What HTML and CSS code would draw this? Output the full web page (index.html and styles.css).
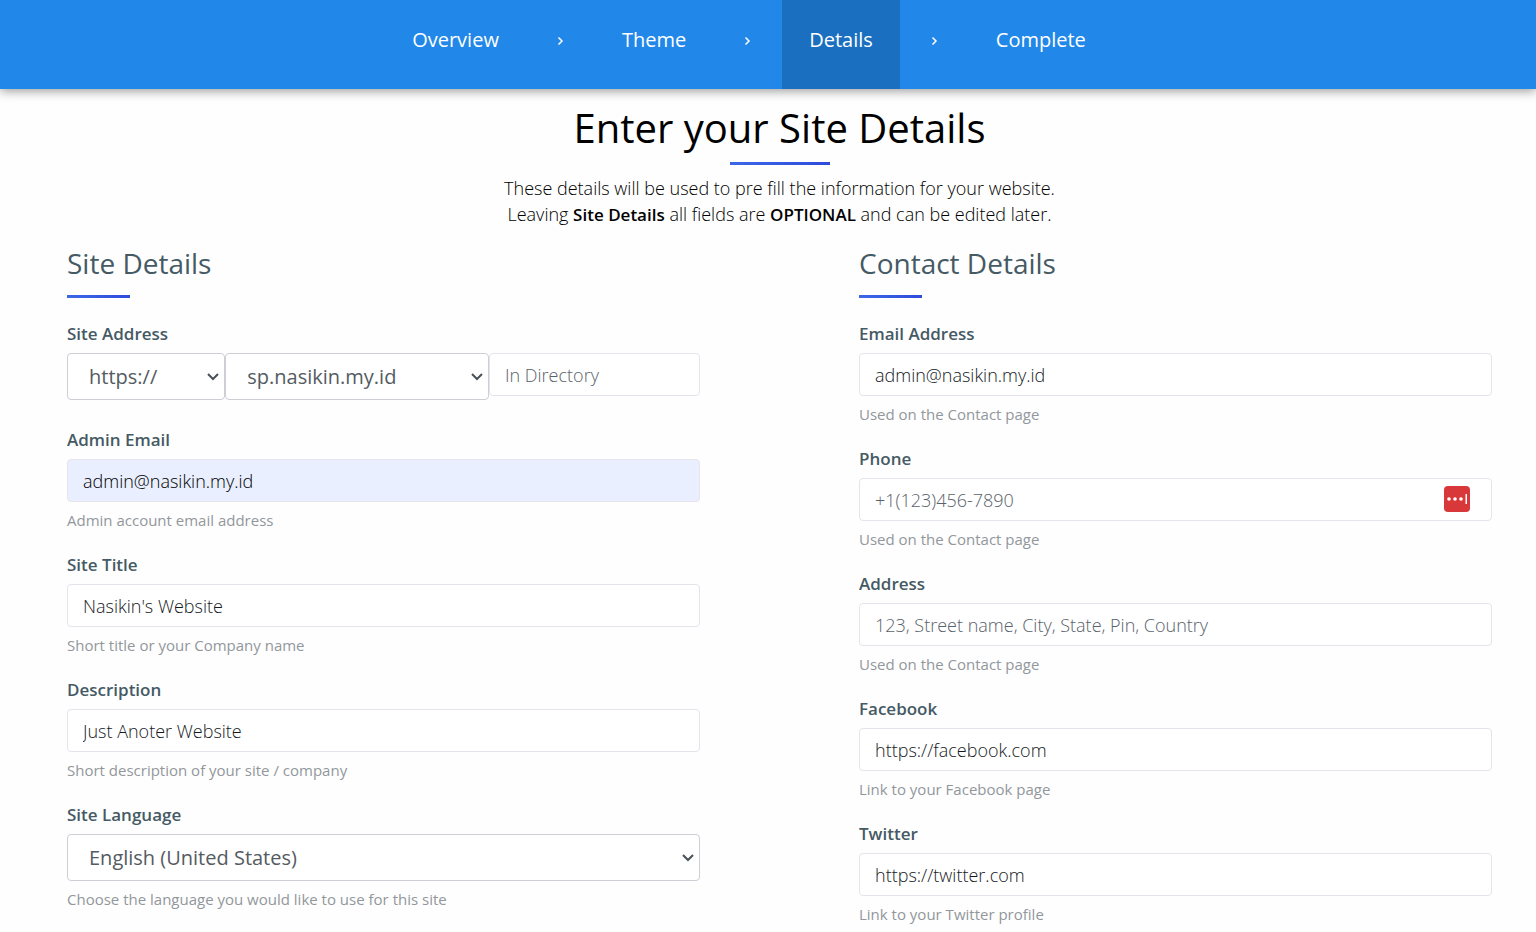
FILE: index.html
```html
<!DOCTYPE html>
<html lang="en">
	<head>
		<meta charset="utf-8">
		<meta name="viewport" content="width=device-width,initial-scale=1.0">
		<title>Enter your Site Details</title>
		<link rel="stylesheet" href="styles.css">
	</head>
	<body>
		<nav class="steps">
			<a href="#overview">Overview</a>
			<svg class="arrow" viewBox="0 0 8 10"><path d="M2 1.500 5.500 5 2 8.500"/></svg>
			<a href="#theme">Theme</a>
			<svg class="arrow" viewBox="0 0 8 10"><path d="M2 1.500 5.500 5 2 8.500"/></svg>
			<a class="active" href="#details">Details</a>
			<svg class="arrow" viewBox="0 0 8 10"><path d="M2 1.500 5.500 5 2 8.500"/></svg>
			<a href="#complete">Complete</a>
		</nav>
		<main class="content">
			<header class="intro">
				<h1>Enter your Site Details</h1>
				<p>These details will be used to pre fill the information for your website.<br>
				Leaving <b>Site Details</b> all fields are <b>OPTIONAL</b> and can be edited later.</p>
			</header>
			<form class="columns">
				<section class="column">
					<h2>Site Details</h2>
					<div class="field address">
						<label for="protocol">Site Address</label>
						<div class="group">
							<select id="protocol">
								<option>https://</option>
								<option>http://</option>
							</select>
							<select id="domain" aria-label="Domain">
								<option>sp.nasikin.my.id</option>
							</select>
							<input id="directory" type="text" placeholder="In Directory" aria-label="In Directory">
						</div>
					</div>
					<div class="field">
						<label for="admin_email">Admin Email</label>
						<input class="filled" id="admin_email" type="email" value="admin@nasikin.my.id">
						<small>Admin account email address</small>
					</div>
					<div class="field">
						<label for="title">Site Title</label>
						<input id="title" type="text" value="Nasikin's Website">
						<small>Short title or your Company name</small>
					</div>
					<div class="field">
						<label for="description">Description</label>
						<input id="description" type="text" value="Just Anoter Website">
						<small>Short description of your site / company</small>
					</div>
					<div class="field">
						<label for="language">Site Language</label>
						<select id="language">
							<option>English (United States)</option>
						</select>
						<small>Choose the language you would like to use for this site</small>
					</div>
				</section>
				<section class="column">
					<h2>Contact Details</h2>
					<div class="field">
						<label for="email">Email Address</label>
						<input id="email" type="email" value="admin@nasikin.my.id">
						<small>Used on the Contact page</small>
					</div>
					<div class="field">
						<label for="phone">Phone</label>
						<div class="with-icon">
							<input id="phone" type="tel" placeholder="+1(123)456-7890">
							<button class="fill" type="button" aria-label="Fill password">
								<svg width="26" height="26" viewBox="0 0 26 26">
									<rect width="26" height="26" rx="4" fill="#d9383a"/>
									<circle cx="5" cy="13" r="1.800" fill="#fff"/>
									<circle cx="11" cy="13" r="1.800" fill="#fff"/>
									<circle cx="17" cy="13" r="1.800" fill="#fff"/>
									<rect x="21.500" y="8" width="1.500" height="10" fill="#fff"/>
								</svg>
							</button>
						</div>
						<small>Used on the Contact page</small>
					</div>
					<div class="field">
						<label for="address">Address</label>
						<input id="address" type="text" placeholder="123, Street name, City, State, Pin, Country">
						<small>Used on the Contact page</small>
					</div>
					<div class="field">
						<label for="facebook">Facebook</label>
						<input id="facebook" type="url" value="https://facebook.com">
						<small>Link to your Facebook page</small>
					</div>
					<div class="field">
						<label for="twitter">Twitter</label>
						<input id="twitter" type="url" value="https://twitter.com">
						<small>Link to your Twitter profile</small>
					</div>
				</section>
			</form>
		</main>
	</body>
</html>
```
FILE: styles.css
```css
* {
	box-sizing: border-box;
	margin: 0;
	padding: 0;
}

body {
	background: #fefefe;
	color: #000;
	font: 300 18px/26px "Open Sans", sans-serif;
}

.steps {
	display: flex;
	justify-content: center;
	height: 89px;
	padding-right: 38px;
	background: #2187e9;
	box-shadow: 0 2px 10px rgba(0, 0, 0, .4);
	font-size: 20px;
	font-weight: 400;
	line-height: 80px;
}

.steps a {
	padding: 0 27px;
	color: #fff;
	text-decoration: none;
}

.steps .active {
	background: #1a6fc0;
}

.arrow {
	width: 69px;
	height: 10px;
	margin-top: 36px;
	fill: none;
	stroke: #fff;
	stroke-width: 1.500;
}

.content {
	padding: 11px 44px 0 67px;
}

.intro {
	text-align: center;
}

h1 {
	font-size: 40px;
	font-weight: 400;
	line-height: 56px;
}

h1::after,
h2::after {
	content: '';
	display: block;
	height: 3px;
	background: linear-gradient(90deg, #3b68e6, #2f4bdc);
}

h1::after {
	width: 100px;
	margin: 6px auto 10px;
}

h2 {
	margin-bottom: 22px;
	color: #455a64;
	font-size: 28px;
	font-weight: 400;
	line-height: 40px;
}

h2::after {
	width: 63px;
	margin-top: 12px;
}

b {
	font-size: 17px;
	font-weight: 600;
}

.columns {
	display: grid;
	grid-template-columns: 1fr 1fr;
	gap: 159px;
	margin-top: 15px;
}

.field {
	display: flex;
	flex-direction: column;
}

.field + .field {
	margin-top: 17px;
}

.address + .field {
	margin-top: 26px;
}

label {
	margin-bottom: 6px;
	color: #455a64;
	font-size: 17px;
	font-weight: 600;
	line-height: 27px;
}

input,
select {
	width: 100%;
	border: 1px solid #e6e3ec;
	border-radius: 4px;
	background: #fff;
	font: inherit;
}

input {
	height: 43px;
	padding: 0 15px;
	color: #15191d;
}

input::placeholder {
	color: #59626a;
}

select {
	height: 47px;
	padding: 0 30px 0 21px;
	border-color: #cdced6;
	background: #fff url("data:image/svg+xml,%3Csvg xmlns='http://www.w3.org/2000/svg' width='12' height='8'%3E%3Cpath d='M1 1l5 5 5-5' fill='none' stroke='%23495057' stroke-width='2'/%3E%3C/svg%3E") no-repeat right 5px center;
	color: #545b62;
	font-size: 20px;
	font-weight: 400;
	appearance: none;
}

.filled {
	background: #e9effe;
	color: #000;
}

.group {
	display: grid;
	grid-template-columns: 3fr 5fr 4fr;
}

small {
	margin-top: 5px;
	color: #92979c;
	font-size: 15px;
	font-weight: 400;
	line-height: 27px;
}

.with-icon {
	position: relative;
}

.fill {
	position: absolute;
	top: 8px;
	right: 22px;
	border: 0;
	background: none;
	line-height: 0;
}
```
